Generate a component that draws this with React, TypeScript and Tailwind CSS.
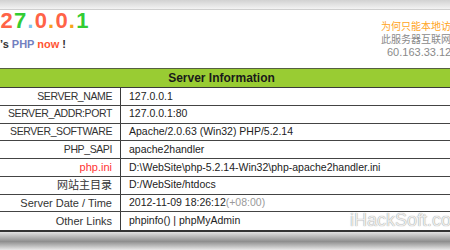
import React from "react";

type Row = { label: React.ReactNode; value: React.ReactNode; caps?: boolean };

const ROWS: Row[] = [
  { label: "SERVER_NAME", value: "127.0.0.1", caps: true },
  { label: "SERVER_ADDR:PORT", value: "127.0.0.1:80", caps: true },
  { label: "SERVER_SOFTWARE", value: "Apache/2.0.63 (Win32) PHP/5.2.14", caps: true },
  { label: "PHP_SAPI", value: "apache2handler", caps: true },
  {
    label: <span className="text-[#ff3333]">php.ini</span>,
    value: "D:\\WebSite\\php-5.2.14-Win32\\php-apache2handler.ini",
  },
  { label: "网站主目录", value: "D:/WebSite/htdocs" },
  {
    label: "Server Date / Time",
    value: (
      <>
        2012-11-09 18:26:12 <span className="text-[#9a9a9a]">(+08:00)</span>
      </>
    ),
  },
  { label: "Other Links", value: "phpinfo() | phpMyAdmin" },
];

export default function App() {
  return (
    <div className="relative h-[250px] w-[450px] overflow-hidden bg-white font-['Liberation_Sans','Noto_Sans_CJK_SC',sans-serif]">
      {/* top bar */}
      <div className="h-[10px] border-b border-[#cfcfcf] bg-gradient-to-b from-[#d2d2d2] to-[#f3f3f3]" />

      {/* header */}
      <div className="flex h-[58px] justify-between">
        <div>
          <div className="ml-[-13px] text-[22px] font-bold leading-[22px] tracking-[1.2px]">
            <span className="text-[#33cc33]">1</span>
            <span className="text-[#ff6347]">2</span>
            <span className="text-[#33cc33]">7</span>
            <span className="text-[#7fc4f0]">.</span>
            <span className="text-[#ff6347]">0</span>
            <span className="text-[#f7a21b]">.</span>
            <span className="text-[#ff6347]">0</span>
            <span className="text-[#f7a21b]">.</span>
            <span className="text-[#33cc33]">1</span>
          </div>
          <div className="mt-[6px] text-[11px] font-bold leading-[12px] text-[#333]">
            <span>’s</span> <span className="text-[#7280c0]">PHP</span>{" "}
            <span className="text-[#ff5533]">now</span> !
          </div>
        </div>
        <div className="mt-[11px] w-[69px] whitespace-nowrap text-[10px] leading-[12.5px] text-[#8a8a8a]">
          <div className="text-[#ffa41c]">为何只能本地访问?</div>
          <div>此服务器互联网IP:</div>
          <div className="pl-[6px] text-[11px]">60.163.33.12</div>
        </div>
      </div>

      {/* table */}
      <div className="ml-[-7px] w-[457px] border-b-2 border-[#333] text-[10.5px] text-[#222]">
        <div className="flex h-[20px] items-center justify-center border-t border-b border-t-[#556040] border-b-[#3a3a3a] bg-[#99cc33] text-[12px] font-bold text-[#1a1a1a]">
          Server Information
        </div>
        {ROWS.map((r, i) => (
          <div
            key={i}
            className={
              i === ROWS.length - 1
                ? "grid h-[17.75px] grid-cols-[128px_1fr]"
                : "grid h-[17.75px] grid-cols-[128px_1fr] border-b border-[#444]"
            }
          >
            <div
              className={
                r.caps
                  ? "flex items-center justify-end border-r border-[#3a3a3a] pr-[8px] whitespace-nowrap text-[#333] tracking-[-0.4px]"
                  : "flex items-center justify-end border-r border-[#3a3a3a] pr-[8px] whitespace-nowrap text-[11px] text-[#333]"
              }
            >
              {r.label}
            </div>
            <div className="flex items-center pl-[8px] whitespace-nowrap">{r.value}</div>
          </div>
        ))}
      </div>

      {/* page shadow */}
      <div className="h-[19px] bg-gradient-to-b from-[#e2e2e2] via-[#8f8f8f] to-[#f4f4f4]" />

      {/* watermark */}
      <div className="absolute left-[350px] top-[211px] text-[18px] leading-[18px] whitespace-nowrap text-[#ececec] [text-shadow:0_0_1px_#7a7a7a]">
        iHackSoft.com
      </div>
    </div>
  );
}
